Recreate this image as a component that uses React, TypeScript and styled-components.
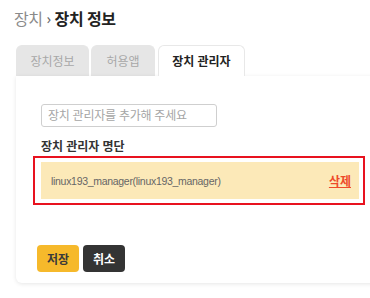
import React, { useState } from "react";
import styled, { createGlobalStyle } from "styled-components";

const GlobalStyle = createGlobalStyle`
  html, body {
    margin: 0;
    padding: 0;
    background: #ffffff;
  }
  body {
    font-family: "Noto Sans", "Noto Sans CJK KR", sans-serif;
    color: #333;
  }
  #root {
    width: 370px;
    height: 298px;
    overflow: hidden;
  }
`;

const Page = styled.div`
  padding: 6px 0 0 16px;
`;

const Title = styled.h1`
  margin: 0 0 0 -2px;
  display: flex;
  align-items: center;
  gap: 3px;
  height: 24px;
  font-size: 16px;
  font-weight: 700;
  color: #222;
  letter-spacing: -0.4px;
`;

const Crumb = styled.span`
  font-weight: 400;
  color: #8a8a8a;
`;

const Chevron = styled.span`
  font-weight: 400;
  color: #666;
  font-size: 14px;
  margin: 0 1px;
`;

const TabBar = styled.div`
  display: flex;
  gap: 2px;
  margin-top: 15px;
  height: 31px;
`;

const Tab = styled.button<{ active?: boolean; w: number }>`
  width: ${({ w }) => w}px;
  height: 31px;
  border: 1px solid ${({ active }) => (active ? "#e8e8e8" : "#e6e6e6")};
  border-bottom: none;
  border-radius: 6px 6px 0 0;
  background: ${({ active }) => (active ? "#ffffff" : "#e6e6e6")};
  color: ${({ active }) => (active ? "#222" : "#a8a8a8")};
  font-family: inherit;
  font-size: 12px;
  font-weight: ${({ active }) => (active ? 700 : 400)};
  padding: 0;
  margin-left: ${({ active }) => (active ? "1px" : "0")};
  cursor: pointer;
  position: relative;
  z-index: ${({ active }) => (active ? 2 : 0)};
`;

const Panel = styled.div`
  position: relative;
  z-index: 1;
  width: 380px;
  height: 207px;
  box-sizing: border-box;
  padding: 28px 25px 11px;
  background: #fff;
  border-radius: 0 0 6px 6px;
  box-shadow: 0 1px 4px rgba(0, 0, 0, 0.1);
  display: flex;
  flex-direction: column;
`;

const Input = styled.input`
  width: 176px;
  height: 23px;
  box-sizing: border-box;
  border: 1px solid #cfcfcf;
  border-radius: 3px;
  padding: 0 6px;
  font-family: inherit;
  font-size: 12px;
  letter-spacing: -0.2px;
  color: #333;
  outline: none;
  &::placeholder {
    color: #a5a5a5;
  }
`;

const SectionLabel = styled.div`
  margin-top: 11px;
  height: 18px;
  line-height: 18px;
  font-size: 12px;
  font-weight: 700;
  color: #333;
`;

const Highlight = styled.div`
  align-self: flex-start;
  margin-left: -8px;
  padding: 4px 4px 4px 6px;
  border: 2px solid #e8121f;
`;

const ListRow = styled.div`
  width: 318px;
  height: 37px;
  box-sizing: border-box;
  padding: 0 8px 0 10px;
  background: #fce9b8;
  display: flex;
  align-items: center;
  justify-content: space-between;
`;

const ManagerName = styled.span`
  font-family: "Liberation Sans", Arial, sans-serif;
  font-size: 10.5px;
  letter-spacing: -0.3px;
  color: #666;
`;

const DeleteLink = styled.a`
  font-size: 12px;
  font-weight: 700;
  color: #ee4a2a;
  text-decoration: underline;
  cursor: pointer;
`;

const Actions = styled.div`
  margin-top: 40px;
  margin-left: -4px;
  display: flex;
  gap: 4px;
`;

const Button = styled.button<{ variant: "save" | "cancel" }>`
  width: 42px;
  height: 27px;
  border: none;
  border-radius: 4px;
  font-family: inherit;
  font-size: 12px;
  font-weight: 700;
  padding: 0;
  background: ${({ variant }) => (variant === "save" ? "#f6b92b" : "#343434")};
  color: ${({ variant }) => (variant === "save" ? "#3a3a3a" : "#ffffff")};
  cursor: pointer;
`;

const tabs = [
  { label: "장치정보", w: 73 },
  { label: "허용앱", w: 64 },
  { label: "장치 관리자", w: 87 },
];

export default function App() {
  const [active, setActive] = useState(2);
  const [value, setValue] = useState("");

  return (
    <>
      <GlobalStyle />
      <Page>
        <Title>
          <Crumb>장치</Crumb>
          <Chevron>›</Chevron>
          <span>장치 정보</span>
        </Title>
        <TabBar>
          {tabs.map((t, i) => (
            <Tab key={t.label} w={t.w} active={i === active} onClick={() => setActive(i)}>
              {t.label}
            </Tab>
          ))}
        </TabBar>
        <Panel>
          <Input
            placeholder="장치 관리자를 추가해 주세요"
            value={value}
            onChange={(e) => setValue(e.target.value)}
          />
          <SectionLabel>장치 관리자 명단</SectionLabel>
          <Highlight>
            <ListRow>
              <ManagerName>linux193_manager(linux193_manager)</ManagerName>
              <DeleteLink>삭제</DeleteLink>
            </ListRow>
          </Highlight>
          <Actions>
            <Button variant="save">저장</Button>
            <Button variant="cancel">취소</Button>
          </Actions>
        </Panel>
      </Page>
    </>
  );
}
